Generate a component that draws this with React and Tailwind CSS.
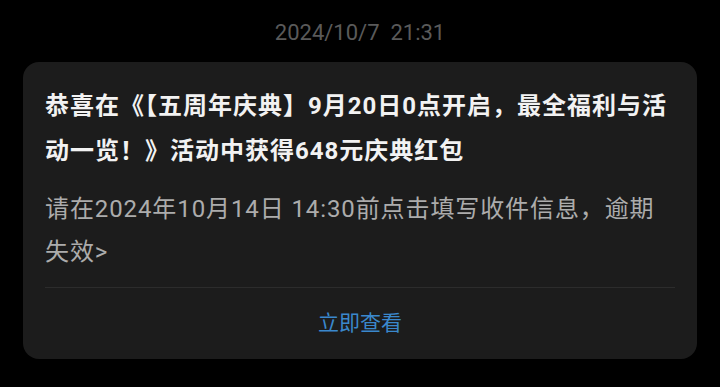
export default function App() {
  const font = { fontFamily: 'Roboto, "Noto Sans CJK SC", sans-serif' };
  return (
    <div className="w-full h-[387px] bg-black flex flex-col overflow-hidden" style={font}>
      <div className="pt-[19px] h-[62px] text-center text-[22px] leading-[28px] text-[#5a5a5a] whitespace-pre">
        {"2024/10/7  21:31"}
      </div>
      <div className="mx-[23px] rounded-[16px] bg-[#1c1c1c] px-[22px]">
        <div className="pt-[22px] text-[24px] leading-[45px] tracking-[1px] font-bold text-[#f2f2f2]">
          恭喜在《【五周年庆典】9月20日0点开启，最全福利与活动一览！》活动中获得648元庆典红包
        </div>
        <div className="mt-[14px] text-[24px] leading-[43px] tracking-[0.9px] text-[#acacac]">
          请在2024年10月14日 14:30前点击填写收件信息，逾期失效&gt;
        </div>
        <div className="mt-[13px] h-px bg-[#2c2c2c]"></div>
        <div className="h-[71px] flex items-center justify-center text-[21px] text-[#3a88cc]">
          立即查看
        </div>
      </div>
    </div>
  );
}
